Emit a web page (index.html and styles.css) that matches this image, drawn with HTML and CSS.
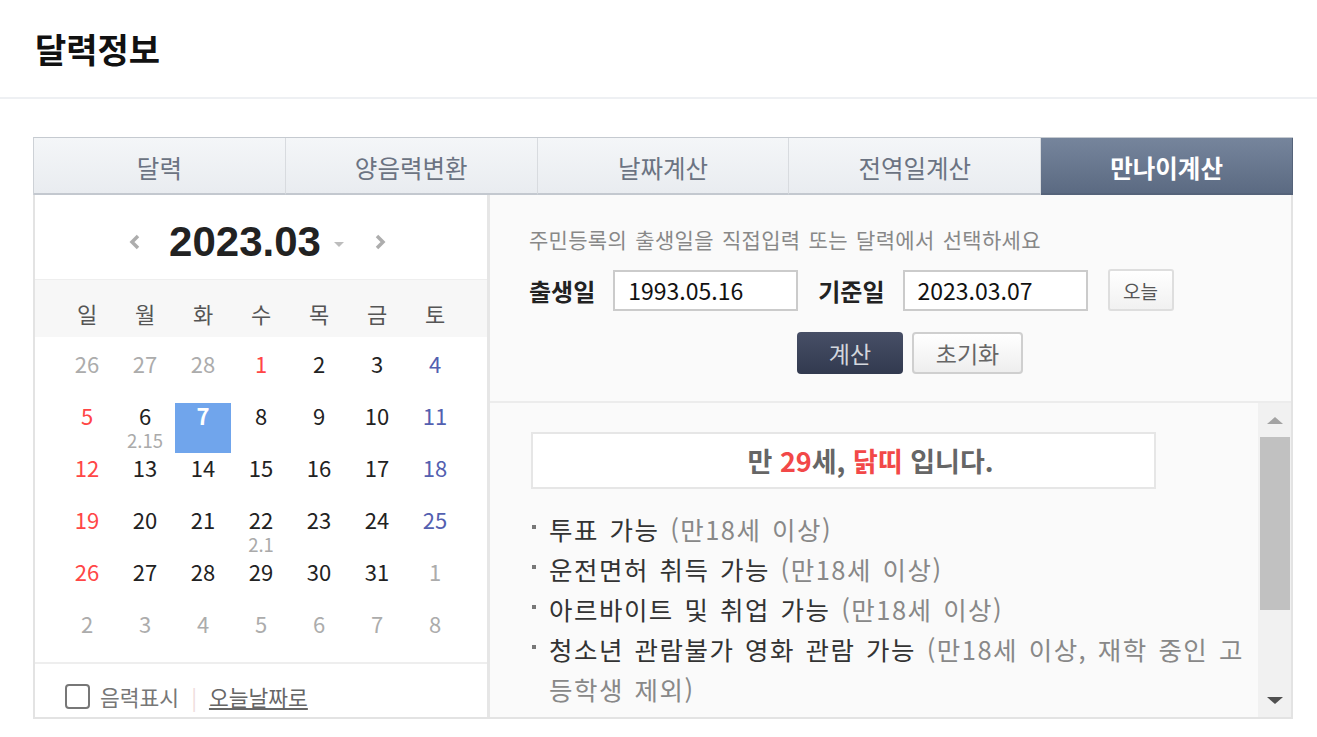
FILE: index.html
```html
<!DOCTYPE html>
<html lang="ko">
<head>
  <meta charset="UTF-8">
  <title>달력정보</title>
  <link rel="stylesheet" href="styles.css">
</head>
<body>
  <header class="page-head">
    <h1>달력정보</h1>
  </header>

  <div class="widget">
    <ul class="tabs">
      <li>달력</li>
      <li>양음력변환</li>
      <li>날짜계산</li>
      <li>전역일계산</li>
      <li class="on">만나이계산</li>
    </ul>

    <div class="panes">
      <!-- left: month calendar -->
      <div class="calendar">
        <div class="cal-head">
          <button class="nav"><svg width="13" height="18" viewBox="0 0 13 18"><polyline points="10,3 4,9 10,15" fill="none" stroke="#adadad" stroke-width="3.5"/></svg></button>
          <strong class="month">2023.03</strong>
          <span class="caret"></span>
          <button class="nav"><svg width="13" height="18" viewBox="0 0 13 18"><polyline points="3,3 9,9 3,15" fill="none" stroke="#adadad" stroke-width="3.5"/></svg></button>
        </div>

        <div class="week">
          <span>일</span><span>월</span><span>화</span><span>수</span><span>목</span><span>금</span><span>토</span>
        </div>

        <div class="days">
          <span class="day other">26</span>
          <span class="day other">27</span>
          <span class="day other">28</span>
          <span class="day sun">1</span>
          <span class="day">2</span>
          <span class="day">3</span>
          <span class="day sat">4</span>

          <span class="day sun">5</span>
          <span class="day">6<small>2.15</small></span>
          <span class="day today">7</span>
          <span class="day">8</span>
          <span class="day">9</span>
          <span class="day">10</span>
          <span class="day sat">11</span>

          <span class="day sun">12</span>
          <span class="day">13</span>
          <span class="day">14</span>
          <span class="day">15</span>
          <span class="day">16</span>
          <span class="day">17</span>
          <span class="day sat">18</span>

          <span class="day sun">19</span>
          <span class="day">20</span>
          <span class="day">21</span>
          <span class="day">22<small>2.1</small></span>
          <span class="day">23</span>
          <span class="day">24</span>
          <span class="day sat">25</span>

          <span class="day sun">26</span>
          <span class="day">27</span>
          <span class="day">28</span>
          <span class="day">29</span>
          <span class="day">30</span>
          <span class="day">31</span>
          <span class="day other">1</span>

          <span class="day other">2</span>
          <span class="day other">3</span>
          <span class="day other">4</span>
          <span class="day other">5</span>
          <span class="day other">6</span>
          <span class="day other">7</span>
          <span class="day other">8</span>
        </div>

        <div class="cal-foot">
          <span class="check"></span>
          <span class="check-label">음력표시</span>
          <span class="sep">|</span>
          <a class="to-today">오늘날짜로</a>
        </div>
      </div>

      <!-- right: age calculator -->
      <div class="age">
        <div class="age-form">
          <p class="guide">주민등록의 출생일을 직접입력 또는 달력에서 선택하세요</p>
          <div class="form-row">
            <label class="field-label">출생일</label>
            <input type="text" class="date-input" value="1993.05.16">
            <label class="field-label">기준일</label>
            <input type="text" class="date-input" value="2023.03.07">
            <button class="btn-today">오늘</button>
          </div>
          <div class="btns">
            <button class="btn-calc">계산</button>
            <button class="btn-reset">초기화</button>
          </div>
        </div>

        <div class="age-result">
          <div class="result-body">
            <div class="summary">만&nbsp;<em>29</em>세,&nbsp;<em>닭띠</em>&nbsp;입니다.</div>
            <ul class="notes">
              <li><p>투표 가능 <span class="cond">(만18세 이상)</span></p></li>
              <li><p>운전면허 취득 가능 <span class="cond">(만18세 이상)</span></p></li>
              <li><p>아르바이트 및 취업 가능 <span class="cond">(만18세 이상)</span></p></li>
              <li><p>청소년 관람불가 영화 관람 가능 <span class="cond">(만18세 이상, 재학 중인 고등학생 제외)</span></p></li>
              <li><p>혼인 가능 <span class="cond">(만18세 이상, 부모 동의 필요)</span></p></li>
              <li><p>국민연금 가입 대상 <span class="cond">(만18세 이상)</span></p></li>
            </ul>
          </div>
          <div class="scrollbar">
            <span class="arrow up"></span>
            <span class="thumb"></span>
            <span class="track"></span>
            <span class="arrow down"></span>
          </div>
        </div>
      </div>
    </div>
  </div>
</body>
</html>
```

FILE: styles.css
```css
/* 달력정보 - 만나이계산 */
body {
  margin: 0;
  font-family: "Noto Sans CJK KR", "Noto Sans", sans-serif;
  background-color: #fff;
  color: #222;
}

.page-head {
  height: 97px;
  border-bottom: 2px solid #eef0f3;
  padding-left: 35px;
  display: flex;
  align-items: center;
}

.page-head h1 {
  margin: 0;
  font-size: 34px;
  line-height: 40px;
  font-weight: bold;
  color: #111;
}

.widget {
  width: 1260px;
  margin: 38px 0 0 33px;
}

/* tabs */
.tabs {
  list-style: none;
  margin: 0;
  padding: 0;
  display: flex;
  border-top: 1px solid #c5cad0;
  border-left: 1px solid #cdd1d6;
}

.tabs li {
  flex: 1;
  height: 57px;
  box-sizing: border-box;
  padding-top: 4px;
  display: flex;
  align-items: center;
  justify-content: center;
  border-right: 1px solid #d8dbdf;
  border-bottom: 2px solid #c3c8cf;
  background: linear-gradient(#f4f6f8, #e9ecf0);
  color: #6b7382;
  font-size: 24.5px;
}

.tabs li.on {
  background: linear-gradient(#76859c, #5b6a82);
  border-color: #55637a;
  color: #fff;
  font-weight: bold;
}

.panes {
  display: flex;
  height: 522px;
  border: 2px solid #e3e3e3;
  border-top: 0;
}

/* calendar */
.calendar {
  width: 452px;
  border-right: 3px solid #e6e6e6;
  background-color: #fff;
  display: flex;
  flex-direction: column;
}

.cal-head {
  height: 84px;
  flex: none;
  box-sizing: border-box;
  padding: 10px 7px 0 0;
  display: flex;
  align-items: center;
  justify-content: center;
}

.nav {
  border: none;
  background: none;
  padding: 0;
  width: 13px;
  height: 18px;
  display: flex;
}

.month {
  font-family: "Liberation Sans", Arial, sans-serif;
  font-size: 42px;
  font-weight: bold;
  color: #222;
  margin: 0 13px 0 28px;
}

.caret {
  width: 0;
  height: 0;
  border-left: 5px solid transparent;
  border-right: 5px solid transparent;
  border-top: 5px solid #bdbdbd;
  margin: 4px 30px 0 0;
}

.week {
  height: 58px;
  flex: none;
  box-sizing: border-box;
  padding-top: 8px;
  border-top: 1px solid #eeeeee;
  background-color: #f7f7f7;
  display: grid;
  grid-template-columns: repeat(7, 58px);
  justify-content: center;
  align-items: center;
  text-align: center;
  font-size: 22px;
  color: #555;
}

.days {
  height: 325px;
  flex: none;
  box-sizing: border-box;
  padding-top: 13px;
  display: grid;
  grid-template-columns: repeat(7, 58px);
  grid-auto-rows: 52px;
  justify-content: center;
}

.day {
  margin: 1px;
  text-align: center;
  font-size: 22px;
  line-height: 24px;
  color: #222;
}

.day small {
  display: block;
  margin-top: 4px;
  font-size: 18.5px;
  line-height: 18px;
  color: #aaa;
}

.day.sun { color: #ff4646; }
.day.sat { color: #5360b0; }
.day.other { color: #acacac; }

.day.today {
  background-color: #70a5ec;
  color: #fff;
  font-weight: bold;
}

.cal-foot {
  flex: 1;
  border-top: 2px solid #eeeeee;
  display: flex;
  align-items: center;
  padding: 12px 0 0 30px;
  font-size: 21.5px;
  color: #777;
}

.check {
  width: 21px;
  height: 21px;
  border: 2px solid #777;
  border-radius: 4px;
  margin-right: 10px;
}

.sep {
  color: #f0dcdc;
  margin: 0 12px;
}

.to-today {
  color: #666;
  text-decoration: underline;
}

/* age calculator */
.age {
  flex: 1;
  background-color: #fafafa;
  display: flex;
  flex-direction: column;
}

.age-form {
  height: 208px;
  flex: none;
  box-sizing: border-box;
  padding: 30px 0 0 39px;
  border-bottom: 2px solid #ececec;
}

.guide {
  margin: 0;
  font-size: 21px;
  line-height: 28px;
  letter-spacing: 0.3px;
  word-spacing: 2px;
  color: #888;
}

.form-row {
  display: flex;
  align-items: center;
  margin-top: 16px;
}

.field-label {
  font-size: 24px;
  font-weight: bold;
  color: #222;
  margin-right: 18px;
}

.date-input {
  width: 185px;
  height: 41px;
  box-sizing: border-box;
  border: 2px solid #cbcbcb;
  padding: 0 13px;
  margin-right: 20px;
  font-family: inherit;
  font-size: 23px;
  color: #111;
  background-color: #fff;
}

.btn-today {
  width: 66px;
  height: 42px;
  border: 2px solid #dedede;
  border-radius: 3px;
  background: linear-gradient(#fff, #f1f1f1);
  font-family: inherit;
  font-size: 19px;
  color: #555;
  padding: 0;
}

.btns {
  display: flex;
  justify-content: center;
  gap: 9px;
  margin-top: 21px;
}

.btn-calc,
.btn-reset {
  height: 42px;
  border-radius: 4px;
  font-family: inherit;
  font-size: 23px;
  padding: 0;
  cursor: pointer;
}

.btn-calc {
  width: 106px;
  border: none;
  background: linear-gradient(#474f66, #323a4f);
  color: #d4d7dd;
}

.btn-reset {
  width: 111px;
  border: 2px solid #cfcfcf;
  background: linear-gradient(#fff, #eeeeee);
  color: #666;
}

.age-result {
  flex: 1;
  min-height: 0;
  display: flex;
}

.result-body {
  flex: 1;
  overflow: hidden;
  padding: 29px 8px 0 41px;
}

.summary {
  width: 625px;
  height: 57px;
  box-sizing: border-box;
  border: 2px solid #e6e6e6;
  background-color: #fff;
  display: flex;
  align-items: center;
  justify-content: center;
  padding-left: 54px;
  font-size: 27px;
  font-weight: bold;
  color: #666;
}

.summary em {
  font-style: normal;
  color: #f24848;
}

.notes {
  list-style: none;
  margin: 20px 0 0;
  padding: 0 0 0 1px;
}

.notes li {
  display: flex;
  font-size: 25.5px;
  line-height: 40px;
  letter-spacing: 1.5px;
  word-spacing: 2px;
  color: #333;
}

.notes li::before {
  content: "";
  flex: none;
  width: 4px;
  height: 4px;
  background-color: #777;
  margin: 16px 13px 0 0;
}

.notes p {
  margin: 0;
}

.cond {
  color: #888;
}

/* scrollbar look */
.scrollbar {
  width: 33px;
  background-color: #f1f1f1;
  display: flex;
  flex-direction: column;
  align-items: center;
}

.arrow {
  height: 34px;
  display: flex;
  align-items: center;
}

.arrow::after {
  content: "";
  border-left: 8px solid transparent;
  border-right: 8px solid transparent;
}

.arrow.up::after { border-bottom: 7px solid #a3a3a3; }
.arrow.down::after { border-top: 7px solid #505050; }

.thumb {
  width: 30px;
  height: 173px;
  background-color: #c1c1c1;
}

.track {
  flex: 1;
}
```
